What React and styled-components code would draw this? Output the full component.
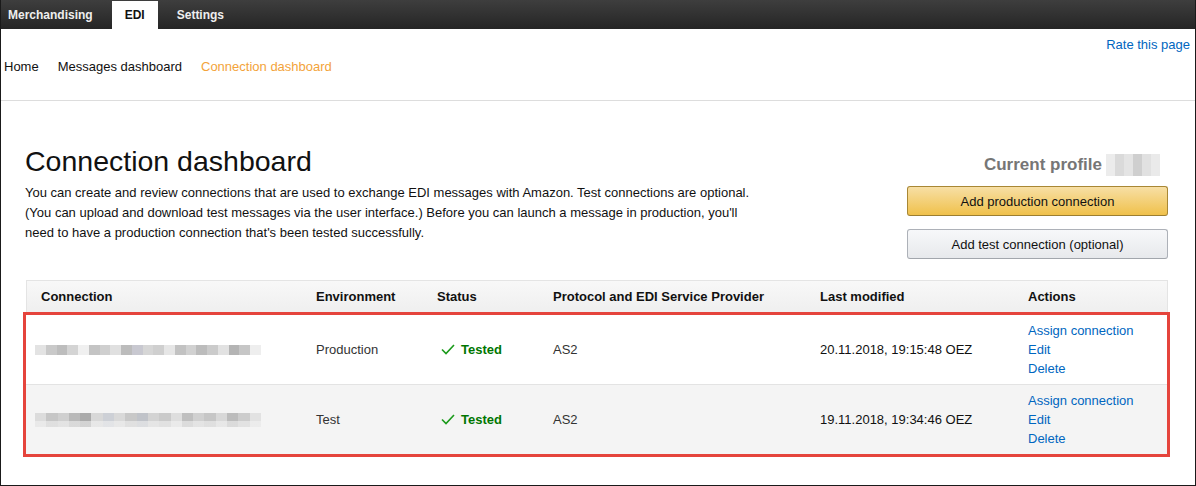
import React from 'react';
import styled, { createGlobalStyle } from 'styled-components';

const GlobalStyle = createGlobalStyle`
  html, body {
    margin: 0;
    padding: 0;
    background: #ffffff;
  }
  body {
    font-family: 'Liberation Sans', Arial, sans-serif;
    color: #111111;
  }
`;

// Rahmen und Navigation
const Frame = styled.div`
  width: 1196px;
  height: 486px;
  box-sizing: border-box;
  border: 1px solid #1a1a1a;
  border-top: none;
  overflow: hidden;
  background: #ffffff;
`;

const TopNav = styled.nav`
  height: 29px;
  display: flex;
  align-items: flex-end;
  background: linear-gradient(to bottom, #3e3e3e, #252525);
  margin: 0 -1px;
`;

const Tab = styled.div`
  height: ${p => (p.$active ? 28 : 29)}px;
  display: flex;
  align-items: center;
  padding: 0 13px;
  margin-right: 6px;
  font-size: 12px;
  font-weight: bold;
  color: ${p => (p.$active ? '#111111' : '#eeeeee')};
  background: ${p => (p.$active ? '#ffffff' : 'transparent')};
  padding-top: ${p => (p.$active ? 0 : 1)}px;
  &:first-child {
    padding-left: 8px;
  }
`;

const SubHeader = styled.header`
  padding: 8px 5px 0 3px;
  height: 63px;
  border-bottom: 1px solid #dddddd;
  display: flex;
  flex-direction: column;
`;

const RateLink = styled.a`
  align-self: flex-end;
  font-size: 13px;
  line-height: 16px;
  color: #0066c0;
  text-decoration: none;
`;

const Breadcrumbs = styled.div`
  display: flex;
  gap: 19px;
  margin-top: 6px;
  font-size: 13px;
  line-height: 16px;
`;

const Crumb = styled.span`
  color: ${p => (p.$current ? '#f3a33a' : '#111111')};
`;

// Hauptbereich
const Main = styled.main`
  padding: 0 27px 0 21px;
`;

const TopRow = styled.div`
  display: flex;
  justify-content: space-between;
  align-items: flex-start;
`;

const Intro = styled.div`
  padding: 44px 0 0 3px;
`;

const Title = styled.h1`
  margin: 0;
  font-size: 28.5px;
  line-height: 32px;
  font-weight: normal;
  color: #111111;
`;

const Lead = styled.p`
  margin: 6px 0 0;
  font-size: 13px;
  line-height: 20px;
  color: #111111;
`;

const SideColumn = styled.div`
  width: 261px;
  padding-top: 53px;
  display: flex;
  flex-direction: column;
`;

const ProfileLine = styled.div`
  display: flex;
  align-items: center;
  justify-content: flex-end;
  gap: 4px;
  padding-right: 8px;
  font-size: 17px;
  line-height: 20px;
  font-weight: bold;
  color: #767676;
`;

const Button = styled.button`
  height: 30px;
  margin-top: ${p => p.$gap}px;
  border-radius: 3px;
  font-family: inherit;
  font-size: 13px;
  color: #111111;
  cursor: pointer;
  border: 1px solid ${p => (p.$primary ? '#a88734' : '#adb1b8')};
  border-bottom-color: ${p => (p.$primary ? '#9c7e31' : '#a2a6ac')};
  background: ${p =>
    p.$primary
      ? 'linear-gradient(to bottom, #f7dfa5, #f0c14b)'
      : 'linear-gradient(to bottom, #f7f8fa, #e7e9ec)'};
`;

// Tabelle
const Table = styled.div`
  margin: 21px 0 0 1px;
  width: 1147px;
`;

const columns = '275px 121px 116px 267px 208px 1fr';

const HeadRow = styled.div`
  margin: 0 2px 0 3px;
  height: 32px;
  box-sizing: border-box;
  border: 1px solid #e4e4e4;
  border-bottom: none;
  background: linear-gradient(to bottom, #f8f8f8, #efefef);
  display: grid;
  grid-template-columns: ${columns};
  align-items: center;
  padding-left: 14px;
  font-size: 13px;
  font-weight: bold;
  color: #111111;
`;

const Highlight = styled.div`
  border: 3px solid #e5443c;
`;

const Row = styled.div`
  display: grid;
  grid-template-columns: ${columns};
  align-items: center;
  padding: 6px 0 6px 15px;
  font-size: 13px;
  line-height: 19px;
  color: #111111;
  background: ${p => (p.$shaded ? '#f4f4f4' : '#ffffff')};
  border-top: ${p => (p.$shaded ? '1px solid #e3e3e3' : 'none')};
`;

const Muted = styled.span`
  color: #333333;
`;

const StatusCell = styled.span`
  display: flex;
  align-items: center;
  gap: 6px;
  padding-left: 4px;
  font-weight: bold;
  color: #007600;
`;

const Actions = styled.div`
  display: flex;
  flex-direction: column;
`;

const ActionLink = styled.a`
  color: #0066c0;
  text-decoration: none;
  align-self: flex-start;
`;

// verpixelte (unkenntlich gemachte) Bereiche
const Pixels = styled.div`
  width: ${p => p.$w}px;
  height: ${p => p.$h}px;
  margin-left: ${p => p.$shift || 0}px;
  background: ${p => p.$bg};
`;

const stripes = colors => {
  const step = 100 / colors.length;
  return colors.map((c, i) => `${c} ${(i * step).toFixed(2)}% ${((i + 1) * step).toFixed(2)}%`).join(', ');
};

const nameBlur1 = `linear-gradient(90deg, ${stripes([
  '#e3e3e3', '#c9c9c9', '#bdbdbd', '#d4d4d4', '#f0f0f0', '#c4c4c4', '#cfcfcf', '#e0e0e0', '#bcbcbc', '#c8c8d0',
  '#d6d6d6', '#cfcfcf', '#e6e6e6', '#c2c2c2', '#d1d1d1', '#bcbcbc', '#cbcbcb', '#e2e2e2', '#b4b4b4', '#c6c6c6', '#eeeeee',
])})`;

const nameBlur2 = `linear-gradient(180deg, rgba(255,255,255,0) 0 55%, rgba(244,244,244,0.55) 55% 100%), linear-gradient(90deg, ${stripes([
  '#dcdcdc', '#c6c6c6', '#cfcfcf', '#b9b9b9', '#aaaaaa', '#d8d8d8', '#cdd0d6', '#d9d9d9', '#c8c8c8', '#c0c3c9', '#d3d3d3',
  '#cacaca', '#dedede', '#bfbfbf', '#d0d0d0', '#c6c6c6', '#d8d8d8', '#bcbcbc', '#cccccc', '#e2e2e2',
])})`;

const profileBlur = `linear-gradient(90deg, ${stripes(['#ececec', '#dadada', '#e4e4e4', '#cfcfcf', '#e1e1e1', '#eaeaea'])})`;

const CheckIcon = () => (
  <svg width="14" height="11" viewBox="0 0 14 11" aria-hidden="true">
    <path d="M1 5.5 L5 9.5 L13 1" fill="none" stroke="#1a9a1a" strokeWidth="1.6" />
  </svg>
);

const connections = [
  { blur: nameBlur1, h: 10, env: 'Production', modified: '20.11.2018, 19:15:48 OEZ' },
  { blur: nameBlur2, h: 14, env: 'Test', modified: '19.11.2018, 19:34:46 OEZ' },
];

const App = () => (
  <>
    <GlobalStyle />
    <Frame>
      <TopNav>
        <Tab>Merchandising</Tab>
        <Tab $active>EDI</Tab>
        <Tab>Settings</Tab>
      </TopNav>

      <SubHeader>
        <RateLink href="#">Rate this page</RateLink>
        <Breadcrumbs>
          <Crumb>Home</Crumb>
          <Crumb>Messages dashboard</Crumb>
          <Crumb $current>Connection dashboard</Crumb>
        </Breadcrumbs>
      </SubHeader>

      <Main>
        <TopRow>
          <Intro>
            <Title>Connection dashboard</Title>
            <Lead>
              You can create and review connections that are used to exchange EDI messages with Amazon. Test connections are optional.
              <br />
              (You can upload and download test messages via the user interface.) Before you can launch a message in production, you'll
              <br />
              need to have a production connection that's been tested successfully.
            </Lead>
          </Intro>
          <SideColumn>
            <ProfileLine>
              Current profile
              <Pixels $w={54} $h={22} $bg={profileBlur} />
            </ProfileLine>
            <Button $primary $gap={10}>Add production connection</Button>
            <Button $gap={13}>Add test connection (optional)</Button>
          </SideColumn>
        </TopRow>

        <Table>
          <HeadRow>
            <span>Connection</span>
            <span>Environment</span>
            <span>Status</span>
            <span>Protocol and EDI Service Provider</span>
            <span>Last modified</span>
            <span>Actions</span>
          </HeadRow>
          <Highlight>
            {connections.map((c, i) => (
              <Row key={c.modified} $shaded={i > 0}>
                <Pixels $w={226} $h={c.h} $shift={-6} $bg={c.blur} />
                <Muted>{c.env}</Muted>
                <StatusCell>
                  <CheckIcon />
                  Tested
                </StatusCell>
                <Muted>AS2</Muted>
                <span>{c.modified}</span>
                <Actions>
                  <ActionLink href="#">Assign connection</ActionLink>
                  <ActionLink href="#">Edit</ActionLink>
                  <ActionLink href="#">Delete</ActionLink>
                </Actions>
              </Row>
            ))}
          </Highlight>
        </Table>
      </Main>
    </Frame>
  </>
);

export default App;
